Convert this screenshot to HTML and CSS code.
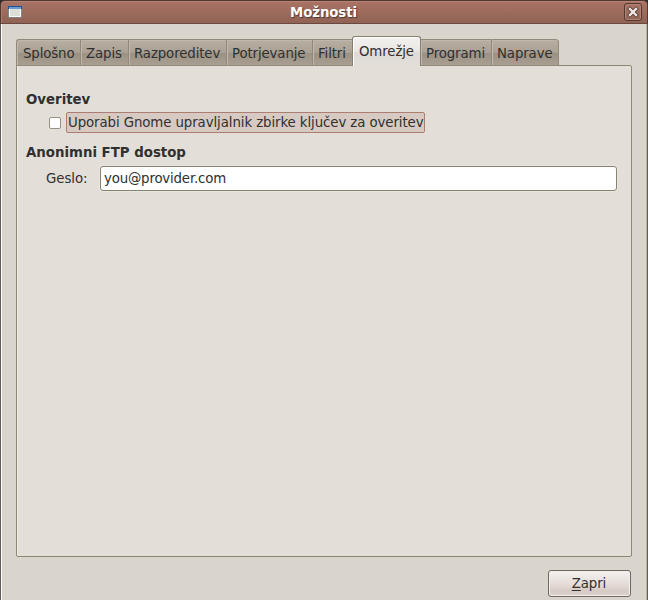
FILE: index.html
```html
<!DOCTYPE html>
<html lang="sl">
<head>
<meta charset="utf-8">
<title>Možnosti</title>
<link rel="stylesheet" href="styles.css">
</head>
<body>
<div class="window">
  <header class="titlebar">
    <svg class="app-icon" width="14" height="12" viewBox="0 0 14 12" shape-rendering="crispEdges">
      <rect width="14" height="12" fill="#858481"/>
      <rect width="14" height="3" fill="#204f91"/>
      <rect x="1" y="1" width="12" height="2" fill="#6c9bd1"/>
      <rect x="1" y="3" width="12" height="8" fill="#fff"/>
      <rect x="2" y="3" width="10" height="7" fill="#dcded8"/>
    </svg>
    <h1 class="title">Možnosti</h1>
    <button class="close" aria-label="Zapri okno">
      <svg width="12" height="12" viewBox="0 0 12 12"><path d="M3 3L9 9M9 3L3 9" stroke="#573c35" stroke-width="4" stroke-linecap="square"/><path d="M3 3L9 9M9 3L3 9" stroke="#eee7e4" stroke-width="2.4" stroke-linecap="square"/></svg>
    </button>
  </header>
  <main class="content">
    <nav class="tabs">
      <div class="tab w-splosno">Splošno</div>
      <div class="tab w-zapis">Zapis</div>
      <div class="tab w-razporeditev">Razporeditev</div>
      <div class="tab w-potrjevanje">Potrjevanje</div>
      <div class="tab w-filtri">Filtri</div>
      <div class="tab active">Omrežje</div>
      <div class="tab w-programi">Programi</div>
      <div class="tab w-naprave last">Naprave</div>
    </nav>
    <section class="pane">
      <h2>Overitev</h2>
      <label class="check"><span class="box"></span><span class="focus">Uporabi Gnome upravljalnik zbirke ključev za overitev</span></label>
      <h2>Anonimni FTP dostop</h2>
      <div class="field"><span class="field-label">Geslo:</span><div class="entry">you@provider.com</div></div>
    </section>
    <footer class="actions"><button class="button"><u>Z</u>apri</button></footer>
  </main>
</div>
</body>
</html>
```
FILE: styles.css
```css
* { box-sizing: border-box; }
body { margin: 0; background: #302e2f; font: 13.33px/16px "DejaVu Sans", sans-serif; color: #303030; overflow: hidden; white-space: nowrap; }
h1, h2 { margin: 0; font-size: inherit; }
button { font: inherit; color: inherit; padding: 0; }
.window { height: 600px; display: flex; flex-direction: column; }
.titlebar {
  height: 24px; display: flex; align-items: center; justify-content: space-between;
  padding: 0 5px 0 7px; border: 1px solid #4e3832; border-bottom-color: #69483f; border-radius: 5px 5px 0 0;
  background: linear-gradient(#a97365, #906355); box-shadow: inset 0 1px #b98273, inset 1px 0 #ad7a6d;
}
.app-icon { display: block; }
.title { color: #fff; text-shadow: 1px 1px 1px #51352d; font-size: 13.33px; letter-spacing: -0.1px; padding-top: 2px; margin-left: 1px; }
.close { width: 18px; height: 18px; border: 1px solid #523a33; border-radius: 3px; background: linear-gradient(#a97567, #926557); box-shadow: inset 0 0 0 1px #b18172; display: flex; align-items: center; justify-content: center; }
.close svg { display: block; }
.content {
  flex: 1; display: flex; flex-direction: column; padding: 12px 15px 0 15px;
  background: #d9d5cd; border-left: 1px solid #655b56; border-right: 1px solid #655b56; box-shadow: inset 1px 0 #fff, inset -1px 0 #b9b3a8;
}
.tabs { display: flex; align-items: flex-end; height: 30px; margin-bottom: -1px; position: relative; }
.tab {
  height: 27px; display: flex; padding: 6px 0 0 6px; letter-spacing: -0.12px;
  border: 1px solid #92897a; border-right: 0;
  background: linear-gradient(#b7afa2 0, #aaa194 50%, #9b9183 51%, #a89e91 100%);
  box-shadow: inset 1px 1px #c0b8ac;
}
.tab:first-child { border-top-left-radius: 3px; }
.last { border-right: 1px solid #92897a; border-top-right-radius: 3px; }
.w-splosno { width: 64px; }
.w-zapis { width: 48px; padding-left: 5px; }
.w-razporeditev { width: 98px; padding-left: 5px; }
.w-potrjevanje { width: 86px; padding-left: 5px; }
.w-filtri { width: 40px; padding-left: 5px; }
.w-programi { width: 70px; padding-left: 5px; border-left: 0; }
.w-naprave { width: 68px; padding-left: 5px; }
.active {
  width: 69px; height: 30px; padding-top: 7px; border: 1px solid #887e6f; border-bottom: 0; border-radius: 3px 3px 0 0;
  background: linear-gradient(#f3f1ef 0, #e9e6e2 52%, #dedad5 53%, #e3ded8 100%); box-shadow: inset 1px 1px #fff;
}
.pane {
  height: 492px; border: 1px solid #8f8675; border-radius: 0 2px 2px 2px; background: #e3ded8; padding: 26px 14px 0 9px;
  box-shadow: inset 1px 0 #efece9;
}
.check { display: flex; align-items: center; height: 21px; margin: 4px 0 12px 23px; }
.box { width: 12px; height: 12px; background: #fff; border: 1px solid #989080; border-radius: 2px; margin-right: 5px; }
.focus { height: 21px; width: 359px; padding: 2px 0 0 1px; border: 1px solid #ac7d70; border-radius: 2px; background: #d6cac3; letter-spacing: -0.09px; }
.field { display: flex; margin: 5px 0 0 20px; height: 25px; }
.field-label { width: 54px; padding-top: 5px; letter-spacing: -0.05px; }
.entry { flex: 1; height: 25px; border: 1px solid #898170; border-radius: 3px; background: #fff; padding: 4px 3px; box-shadow: 0 0 0 1px #eae6e0; letter-spacing: -0.18px; }
.actions { display: flex; justify-content: flex-end; margin: 13px 1px 0 0; }
.button { width: 83px; height: 27px; border: 1px solid #706762; border-radius: 3px; background: linear-gradient(#f4f1f0, #e6ddd9 50%, #d7cac5 80%, #ddd2ce); box-shadow: inset 0 0 0 1px #f2eeeb; letter-spacing: -0.1px; padding: 0 1px 0 0; }
.button u { text-underline-offset: 2px; text-decoration-thickness: 1px; }
```
